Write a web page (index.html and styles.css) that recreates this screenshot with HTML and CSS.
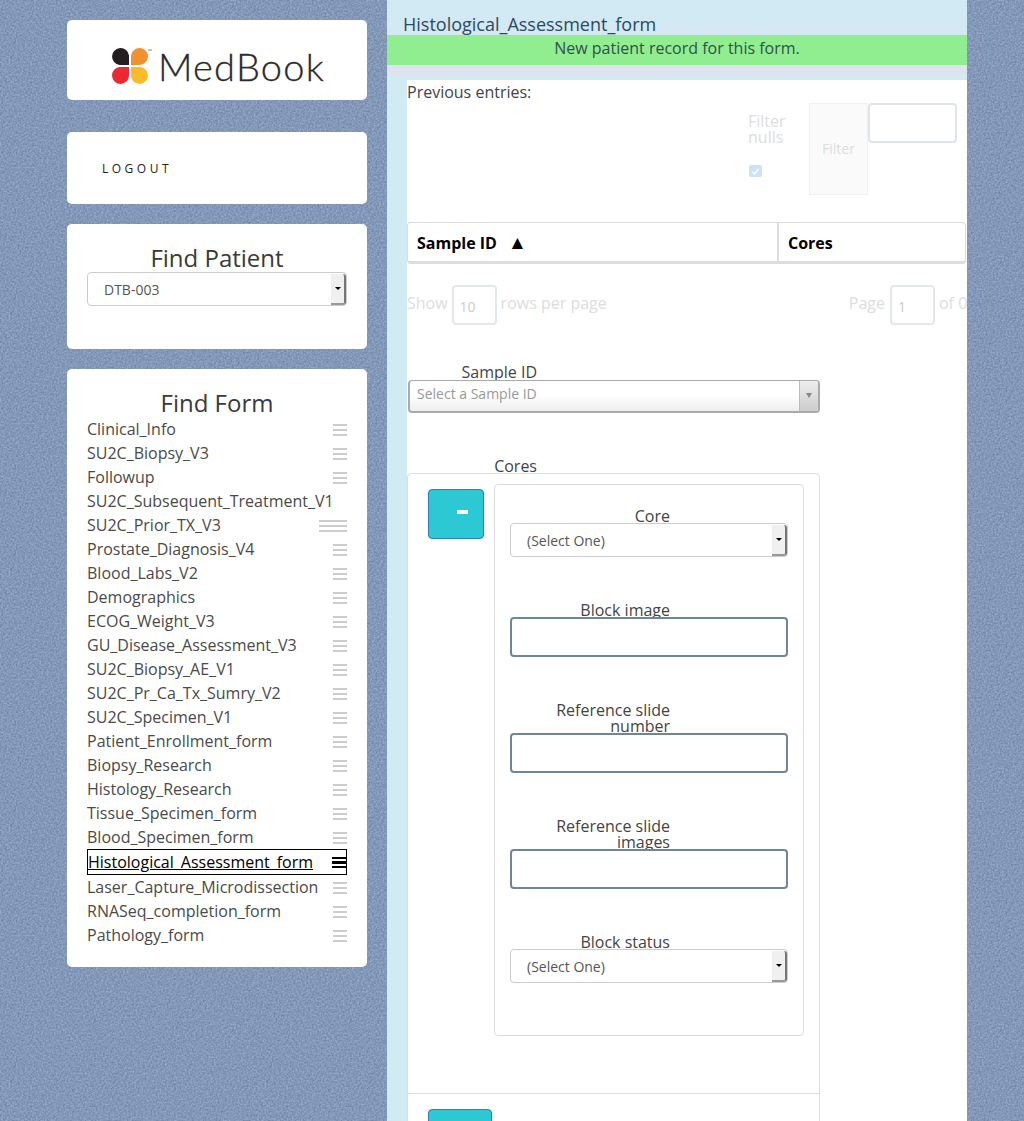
FILE: index.html
```html
<!DOCTYPE html>
<html lang="en">
<head>
    <meta charset="UTF-8">
    <meta name="viewport" content="width=device-width, initial-scale=1.0">
    <title>MedBook - Histological_Assessment_form</title>
    <link rel="stylesheet" href="styles.css">
</head>
<body>
    <div class="sidebar">
        <div class="card logo-card">
            <svg class="logo-mark" width="38" height="38" viewBox="0 0 38 38">
                <path d="M18 18H8.500A8.500 8.500 0 1 1 18 8.500Z" fill="#231f20"/>
                <path d="M20 18V8.500A8.500 8.500 0 1 1 28.500 18Z" fill="#f29130"/>
                <path d="M18 20V28.500A8.500 8.500 0 1 1 8.500 20Z" fill="#ec2830"/>
                <path d="M20 20H28.500A8.500 8.500 0 1 1 20 28.500Z" fill="#fdbb2a"/>
            </svg>
            <span class="logo-tm">™</span>
            <span class="logo-text">MedBook</span>
        </div>

        <div class="card logout-card">
            <a class="logout" href="#">Logout</a>
        </div>

        <div class="card patient-card">
            <h2>Find Patient</h2>
            <div class="select-box"><span>DTB-003</span><span class="select-arrow"></span></div>
        </div>

        <div class="card form-card">
            <h2>Find Form</h2>
            <div class="form-row"><span>Clinical_Info</span><i class="bars"></i></div>
            <div class="form-row"><span>SU2C_Biopsy_V3</span><i class="bars"></i></div>
            <div class="form-row"><span>Followup</span><i class="bars"></i></div>
            <div class="form-row"><span>SU2C_Subsequent_Treatment_V1</span></div>
            <div class="form-row"><span>SU2C_Prior_TX_V3</span><i class="bars"></i><i class="bars"></i></div>
            <div class="form-row"><span>Prostate_Diagnosis_V4</span><i class="bars"></i></div>
            <div class="form-row"><span>Blood_Labs_V2</span><i class="bars"></i></div>
            <div class="form-row"><span>Demographics</span><i class="bars"></i></div>
            <div class="form-row"><span>ECOG_Weight_V3</span><i class="bars"></i></div>
            <div class="form-row"><span>GU_Disease_Assessment_V3</span><i class="bars"></i></div>
            <div class="form-row"><span>SU2C_Biopsy_AE_V1</span><i class="bars"></i></div>
            <div class="form-row"><span>SU2C_Pr_Ca_Tx_Sumry_V2</span><i class="bars"></i></div>
            <div class="form-row"><span>SU2C_Specimen_V1</span><i class="bars"></i></div>
            <div class="form-row"><span>Patient_Enrollment_form</span><i class="bars"></i></div>
            <div class="form-row"><span>Biopsy_Research</span><i class="bars"></i></div>
            <div class="form-row"><span>Histology_Research</span><i class="bars"></i></div>
            <div class="form-row"><span>Tissue_Specimen_form</span><i class="bars"></i></div>
            <div class="form-row"><span>Blood_Specimen_form</span><i class="bars"></i></div>
            <div class="form-row selected"><span>Histological_Assessment_form</span><i class="bars"></i></div>
            <div class="form-row"><span>Laser_Capture_Microdissection</span><i class="bars"></i></div>
            <div class="form-row"><span>RNASeq_completion_form</span><i class="bars"></i></div>
            <div class="form-row"><span>Pathology_form</span><i class="bars"></i></div>
        </div>
    </div>

    <div class="main">
        <div class="main-title">Histological_Assessment_form</div>
        <div class="notice">New patient record for this form.</div>
        <div class="notice-strip"></div>

        <div class="panel">
            <div class="previous">Previous entries:</div>

            <div class="filter-row">
                <div class="filter-nulls">
                    <div>Filter nulls</div>
                    <span class="check">
                        <svg width="9" height="9" viewBox="0 0 9 9"><path d="M1.500 4.800L3.600 7L7.500 2" fill="none" stroke="#fff" stroke-width="1.500"/></svg>
                    </span>
                </div>
                <div class="filter-button">Filter</div>
                <input class="filter-input" type="text">
            </div>

            <table class="entries">
                <tr>
                    <th class="col-sample">Sample ID <span class="sort">▲</span></th>
                    <th>Cores</th>
                </tr>
            </table>

            <div class="pager">
                <span>Show</span>
                <input class="pager-input" type="text" value="10">
                <span>rows per page</span>
                <span class="pager-page">Page</span>
                <input class="pager-input" type="text" value="1">
                <span>of 0</span>
            </div>

            <label class="outer-label sample-label">Sample ID</label>
            <div class="chosen"><span>Select a Sample ID</span><span class="chosen-arrow"></span></div>

            <label class="outer-label cores-label">Cores</label>
            <div class="cores-box">
                <div class="cores-item">
                    <button class="minus-button"><i></i></button>
                    <div class="core-fields">
                        <div class="field">
                            <label>Core</label>
                            <div class="select-box"><span>(Select One)</span><span class="select-arrow"></span></div>
                        </div>
                        <div class="field">
                            <label>Block image</label>
                            <input class="text-input" type="text">
                        </div>
                        <div class="field">
                            <label>Reference slide number</label>
                            <input class="text-input" type="text">
                        </div>
                        <div class="field">
                            <label>Reference slide images</label>
                            <input class="text-input" type="text">
                        </div>
                        <div class="field">
                            <label>Block status</label>
                            <div class="select-box"><span>(Select One)</span><span class="select-arrow"></span></div>
                        </div>
                    </div>
                </div>
                <div class="cores-footer">
                    <button class="add-button"></button>
                </div>
            </div>
        </div>
    </div>
</body>
</html>
```

FILE: styles.css
```css
html, body {
    height: 100%;
}

body {
    margin: 0;
    height: 100vh;
    overflow: hidden;
    display: flex;
    gap: 20px;
    padding-left: 67px;
    box-sizing: border-box;
    font-family: "Open Sans", sans-serif;
    font-size: 16px;
    color: #444;
    background-color: #849cc4;
    background-image: url("data:image/svg+xml,%3Csvg xmlns='http://www.w3.org/2000/svg' width='256' height='256'%3E%3Cfilter id='n' color-interpolation-filters='sRGB'%3E%3CfeTurbulence type='fractalNoise' baseFrequency='.55' numOctaves='2' stitchTiles='stitch'/%3E%3CfeColorMatrix values='1.600 0 0 0 -.3 1.600 0 0 0 -.3 1.600 0 0 0 -.3 0 0 0 0 .16'/%3E%3C/filter%3E%3Crect width='256' height='256' filter='url(%23n)'/%3E%3C/svg%3E");
}

/* left column */
.sidebar {
    width: 300px;
    flex: none;
    padding-top: 20px;
}

.card {
    background-color: #fff;
    border-radius: 5px;
    margin-bottom: 20px;
}

.card h2 {
    margin: 0;
    font-size: 24px;
    font-weight: 400;
    line-height: 28px;
    text-align: center;
    color: #3a3a3a;
}

.logo-card {
    height: 80px;
    margin-bottom: 32px;
    display: flex;
    align-items: center;
    padding: 12px 0 0 44px;
    box-sizing: border-box;
}

.logo-mark {
    flex: none;
}

.logo-tm {
    font-size: 5px;
    line-height: 6px;
    align-self: flex-start;
    margin-top: 16px;
    width: 10px;
    margin-left: -1px;
    color: #555;
}

.logo-text {
    font-family: Lato, sans-serif;
    font-weight: 300;
    font-size: 38px;
    color: #2b2b2b;
    letter-spacing: 1.200px;
    -webkit-text-stroke: 0.3px #2b2b2b;
}

.logout-card {
    height: 72px;
    display: flex;
    align-items: center;
    padding-left: 35px;
}

.logout {
    font-size: 12px;
    letter-spacing: 3.500px;
    text-transform: uppercase;
    color: #222;
    text-decoration: none;
}

.patient-card {
    padding: 20px 20px 43px;
}

.form-card {
    padding: 20px 20px 20px;
}

.form-row {
    height: 24px;
    display: flex;
    align-items: center;
    justify-content: flex-end;
    color: #4a4a4a;
    white-space: nowrap;
}

.form-row span {
    margin-right: auto;
}

.form-row.selected {
    height: 26px;
    border: 1px solid #000;
    box-sizing: border-box;
    color: #000;
}

.form-row.selected span {
    text-decoration: underline;
}

.bars {
    width: 14px;
    height: 12px;
    flex: none;
    margin-top: 2px;
    background: repeating-linear-gradient(#ccc 0, #ccc 2px, transparent 2px, transparent 5px);
}

.selected .bars {
    background: repeating-linear-gradient(#000 0, #000 2.500px, transparent 2.500px, transparent 4.500px);
}

/* fake selects */
.select-box {
    position: relative;
    height: 34px;
    display: flex;
    align-items: center;
    padding-left: 16px;
    box-sizing: border-box;
    background-color: #fff;
    border: 1px solid #ccc;
    border-radius: 4px;
    font-size: 14px;
    color: #555;
}

.select-arrow {
    position: absolute;
    top: 1px;
    right: 0;
    bottom: 0;
    width: 13px;
    background-color: #f0f0f0;
    border-right: 2px solid #777;
    border-bottom: 2px solid #999;
    border-radius: 0 3px 3px 0;
}

.select-arrow::after {
    content: "";
    position: absolute;
    top: 13px;
    left: 4px;
    border: 3px solid transparent;
    border-top: 3px solid #000;
}

/* right column */
.main {
    width: 580px;
    flex: none;
    overflow: hidden;
    background: linear-gradient(#d0ebf4, #d4e8f2 35px, #d0ebf4 75px);
}

.main-title {
    height: 35px;
    padding: 13px 0 0 16px;
    box-sizing: border-box;
    font-size: 18px;
    line-height: 22px;
    color: #2a4a63;
    white-space: nowrap;
}

.notice {
    height: 30px;
    line-height: 26px;
    text-align: center;
    background-color: #90ee90;
    color: #33504a;
}

.notice-strip {
    height: 10px;
    background-color: #dde4ef;
}

.panel {
    margin: 5px 0 0 20px;
    background-color: #fff;
}

.previous {
    height: 24px;
    line-height: 24px;
    color: #444;
}

.filter-row {
    display: flex;
    justify-content: flex-end;
    align-items: flex-start;
    padding-right: 10px;
    margin-top: -1px;
}

.filter-nulls {
    width: 61px;
    padding-top: 10px;
    box-sizing: border-box;
    line-height: 16px;
    color: #ddd;
}

.check {
    display: flex;
    align-items: center;
    justify-content: center;
    width: 13px;
    height: 12px;
    margin: 20px 0 0 1px;
    background-color: #cae2fa;
    border-radius: 2px;
}

.filter-button {
    width: 59px;
    height: 92px;
    padding-bottom: 2px;
    display: flex;
    align-items: center;
    justify-content: center;
    box-sizing: border-box;
    background-color: #fafafa;
    border: 1px solid #f1f1f1;
    font-size: 14px;
    color: #ddd;
}

.filter-input {
    width: 89px;
    height: 40px;
    box-sizing: border-box;
    border: 2px solid #dfe5e8;
    border-radius: 4px;
    background-color: #fff;
}

.entries {
    width: 559px;
    height: 42px;
    margin-top: 27px;
    border-collapse: separate;
    border-spacing: 0;
    border: 1px solid #ddd;
    border-bottom: 3px solid #ddd;
    border-radius: 4px;
    color: #000;
    table-layout: fixed;
}

.entries th {
    padding: 2px 9px 0;
    font-size: 16px;
    font-weight: 700;
    text-align: left;
}

.entries .col-sample {
    width: 351px;
    border-right: 2px solid #ddd;
}

.sort {
    margin-left: 7px;
    font-size: 19px;
    line-height: 16px;
}

.pager {
    display: flex;
    align-items: center;
    gap: 4px;
    height: 40px;
    margin-top: 21px;
    white-space: nowrap;
    color: #ddd;
}

.pager span {
    flex: none;
    margin-bottom: 4px;
}

.pager .pager-page {
    margin: 0 1px 4px 238px;
}

.pager-input {
    flex: none;
    width: 45px;
    height: 40px;
    padding: 3px 6px 0;
    box-sizing: border-box;
    border: 2px solid #e3e8ea;
    border-radius: 4px;
    font-family: "Open Sans", sans-serif;
    font-size: 14px;
    color: #ccc;
}

.outer-label {
    display: block;
    width: 130px;
    line-height: 16px;
    text-align: right;
    color: #444;
}

.sample-label {
    margin-top: 39px;
}

.chosen {
    position: relative;
    width: 412px;
    height: 33px;
    margin-left: 1px;
    padding: 0 0 5px 7px;
    box-sizing: border-box;
    display: flex;
    align-items: center;
    background: linear-gradient(#fff 45%, #eee);
    border: 2px solid #aaa;
    border-top-width: 1px;
    border-radius: 4px;
    font-size: 14px;
    color: #999;
}

.chosen-arrow {
    position: absolute;
    top: 0;
    right: 0;
    bottom: 0;
    width: 18px;
    background: linear-gradient(#eee, #ccc);
    border-left: 1px solid #bbb;
    border-radius: 0 3px 3px 0;
}

.chosen-arrow::after {
    content: "";
    position: absolute;
    top: 12px;
    left: 6px;
    border: 3px solid transparent;
    border-top: 5px solid #888;
}

.cores-label {
    margin-top: 45px;
    margin-bottom: -1px;
}

.cores-box {
    position: relative;
    width: 413px;
    box-sizing: border-box;
    border: 1px solid #ddd;
    border-radius: 4px;
}

.cores-item {
    display: flex;
    align-items: flex-start;
    gap: 10px;
    padding: 10px 15px 57px 20px;
}

.minus-button {
    flex: none;
    width: 56px;
    height: 50px;
    margin-top: 5px;
    display: flex;
    align-items: center;
    justify-content: center;
    padding: 0 0 4px 12px;
    background-color: #2cc8d4;
    border: 1px solid #2a80b9;
    border-radius: 4px;
}

.minus-button i {
    width: 11px;
    height: 4px;
    background-color: #fff;
}

.core-fields {
    width: 310px;
    box-sizing: border-box;
    padding: 23px 15px 52px;
    border: 1px solid #ddd;
    border-radius: 4px;
}

.field + .field {
    margin-top: 45px;
}

.field label {
    display: block;
    width: 160px;
    line-height: 16px;
    text-align: right;
    color: #444;
    margin-bottom: -1px;
}

.text-input {
    position: relative;
    display: block;
    width: 278px;
    height: 40px;
    box-sizing: border-box;
    border: 2px solid #6f8694;
    border-radius: 4px;
    background-color: #fff;
}

.cores-footer {
    border-top: 1px solid #ddd;
    padding: 15px 20px;
}

.add-button {
    display: block;
    width: 64px;
    height: 50px;
    background-color: #2cc8d4;
    border: 1px solid #2a80b9;
    border-radius: 4px;
}
```
